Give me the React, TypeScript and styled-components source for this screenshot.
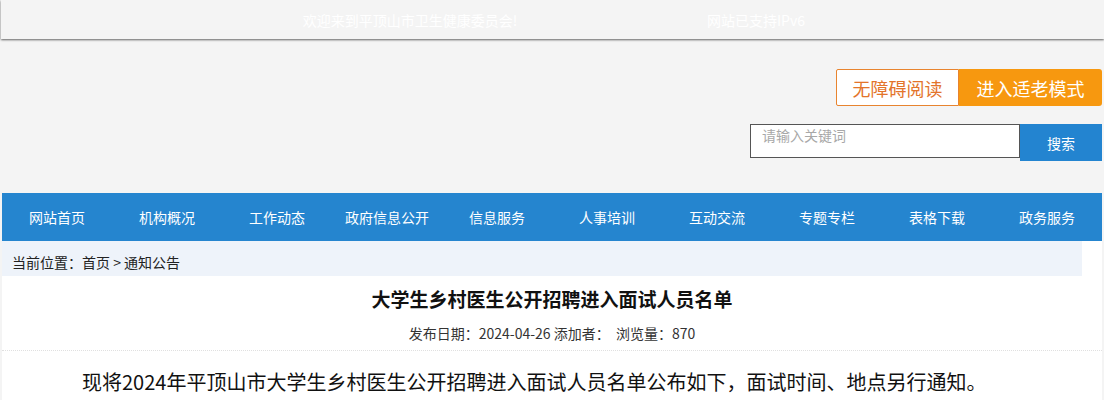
import styled, { createGlobalStyle } from "styled-components"

const GlobalStyle = createGlobalStyle`
  body {
    margin: 0;
    background: #f4f4f4;
    font-family: "Noto Sans CJK SC", "Noto Sans", sans-serif;
  }
`

const navItems = [
  "网站首页",
  "机构概况",
  "工作动态",
  "政府信息公开",
  "信息服务",
  "人事培训",
  "互动交流",
  "专题专栏",
  "表格下载",
  "政务服务",
]

const App = () => {
  return (
    <>
      <GlobalStyle />
      <TopBar>
        <TopText $center={409}>欢迎来到平顶山市卫生健康委员会!</TopText>
        <TopText $center={755}>网站已支持IPv6</TopText>
      </TopBar>

      <Wrap>
        <Header>
          <ModeRow>
            <PlainMode>无障碍阅读</PlainMode>
            <ElderMode>进入适老模式</ElderMode>
          </ModeRow>
          <SearchRow>
            <SearchInput placeholder="请输入关键词" />
            <SearchButton>搜索</SearchButton>
          </SearchRow>
        </Header>

        <Nav>
          {navItems.map((item) => (
            <NavItem key={item}>{item}</NavItem>
          ))}
        </Nav>

        <Content>
          <Crumb>当前位置：首页 &gt; 通知公告</Crumb>
          <Title>大学生乡村医生公开招聘进入面试人员名单</Title>
          <Meta>发布日期：2024-04-26 添加者：&nbsp;&nbsp;浏览量：870</Meta>
          <Body>现将2024年平顶山市大学生乡村医生公开招聘进入面试人员名单公布如下，面试时间、地点另行通知。</Body>
        </Content>
      </Wrap>
    </>
  )
}

export default App

const TopBar = styled.div`
  position: relative;
  height: 39px;
  margin-left: 1px;
  background: #f4f4f4;
  box-shadow: 0 1px 2px rgba(0, 0, 0, 0.6);
`

const TopText = styled.span<{ $center: number }>`
  position: absolute;
  top: 10px;
  left: ${(p) => p.$center}px;
  transform: translateX(-50%);
  font-size: 14px;
  line-height: 20px;
  color: #ffffff;
  white-space: nowrap;
`

const Wrap = styled.div`
  width: 1100px;
  margin: 0 auto;
`

const Header = styled.div`
  height: 154px;
  padding-top: 30px;
  box-sizing: border-box;
  display: flex;
  flex-direction: column;
  align-items: flex-end;
`

const ModeRow = styled.div`
  display: flex;
  height: 37px;
`

const PlainMode = styled.div`
  width: 123px;
  box-sizing: border-box;
  border: 1px solid #e8842f;
  border-radius: 2px 0 0 2px;
  background: #fff;
  color: #e3742a;
  font-size: 18px;
  display: flex;
  align-items: center;
  justify-content: center;
`

const ElderMode = styled.div`
  width: 143px;
  background: #f7980f;
  border-radius: 0 3px 3px 0;
  color: #fff;
  font-size: 18px;
  display: flex;
  align-items: center;
  justify-content: center;
`

const SearchRow = styled.div`
  display: flex;
  align-items: flex-start;
  margin-top: 18px;
`

const SearchInput = styled.input`
  width: 270px;
  height: 34px;
  box-sizing: border-box;
  border: 1px solid #555;
  padding: 0 11px 12px;
  font-family: inherit;
  font-size: 14px;
  outline: none;
  &::placeholder {
    color: #a8a8a8;
  }
`

const SearchButton = styled.div`
  width: 82px;
  height: 37px;
  background: #2384d0;
  color: #fff;
  font-size: 14px;
  display: flex;
  align-items: center;
  justify-content: center;
`

const Nav = styled.div`
  display: grid;
  grid-template-columns: repeat(10, 1fr);
  height: 48px;
  background: #2585cf;
`

const NavItem = styled.div`
  color: #fff;
  font-size: 14px;
  display: flex;
  align-items: center;
  justify-content: center;
`

const Content = styled.div`
  background: #fff;
  padding-bottom: 20px;
`

const Crumb = styled.div`
  width: 1080px;
  height: 35px;
  box-sizing: border-box;
  padding: 7px 0 0 10px;
  background: #eef3fa;
  font-size: 14px;
  color: #222;
  display: flex;
  align-items: center;
`

const Title = styled.h1`
  margin: 0;
  padding-top: 10px;
  text-align: center;
  font-size: 19px;
  line-height: 26px;
  font-weight: bold;
  color: #111;
`

const Meta = styled.div`
  padding: 11px 0 7px;
  text-align: center;
  font-size: 14px;
  line-height: 20px;
  color: #333;
  border-bottom: 1px dotted #e0e0e0;
`

const Body = styled.p`
  margin: 0;
  padding: 17px 0 0 80px;
  font-size: 20px;
  line-height: 28px;
  color: #111;
`
